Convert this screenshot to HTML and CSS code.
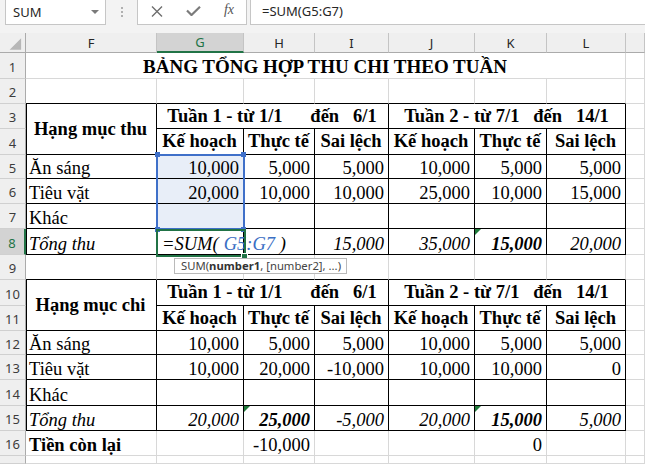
FILE: index.html
```html
<!DOCTYPE html>
<html lang="vi">
<head>
<meta charset="utf-8">
<title>SUM</title>
<link rel="stylesheet" href="styles.css">
</head>
<body>
<div class="topbar">
  <div class="namebox">
    <span class="nb-text">SUM</span>
    <svg class="dd" width="8" height="4" viewBox="0 0 8 4"><path d="M0 0H8L4 4Z" fill="#7a7a7a"/></svg>
  </div>
  <div class="dots"><i></i><i></i><i></i></div>
  <div class="btns">
    <svg class="ico" width="12" height="11" viewBox="0 0 12 11"><path d="M1 0.5L11 10.5M11 0.5L1 10.5" stroke="#6e6e6e" stroke-width="1.4" fill="none"/></svg>
    <svg class="ico" width="15" height="10" viewBox="0 0 15 10"><path d="M1 4.5L5.5 9L14 0.8" stroke="#7b7b7b" stroke-width="2.2" fill="none"/></svg>
    <span class="fx">fx</span>
  </div>
  <div class="fbox">=SUM(G5:G7)</div>
</div>

<div class="sheet">
  <!-- column headers -->
  <div class="ch corner"><svg width="26" height="20" viewBox="0 0 26 20"><path d="M10 17H22V5Z" fill="#b7b7b7"/></svg></div>
  <div class="ch">F</div><div class="ch sel">G</div><div class="ch">H</div><div class="ch">I</div><div class="ch">J</div><div class="ch">K</div><div class="ch">L</div><div class="ch"></div>

  <!-- row 1 -->
  <div class="rh">1</div>
  <div class="c cs7 m title b">BẢNG TỔNG HỢP THU CHI THEO TUẦN</div>
  <div class="c"></div>

  <!-- row 2 -->
  <div class="rh">2</div>
  <div class="c tb"></div><div class="c tb"></div><div class="c tb"></div><div class="c tb"></div><div class="c tb"></div><div class="c tb"></div><div class="c tb"></div>
  <div class="c"></div>

  <!-- row 3 -->
  <div class="rh">3</div>
  <div class="c t tl rs2 m mid b">Hạng mục thu</div>
  <div class="c t cs3 m mid b">Tuần 1 - từ 1/1      đến   6/1</div>
  <div class="c t cs3 m mid b">Tuần 2 - từ 7/1   đến   14/1</div>
  <div class="c"></div>

  <!-- row 4 -->
  <div class="rh">4</div>
  <div class="c t m mid b">Kế hoạch</div><div class="c t m mid b">Thực tế</div><div class="c t m mid b">Sai lệch</div>
  <div class="c t m mid b">Kế hoạch</div><div class="c t m mid b">Thực tế</div><div class="c t m mid b">Sai lệch</div>
  <div class="c"></div>

  <!-- row 5 -->
  <div class="rh">5</div>
  <div class="c t tl">Ăn sáng</div>
  <div class="c t r hl">10,000</div><div class="c t r">5,000</div><div class="c t r">5,000</div>
  <div class="c t r">10,000</div><div class="c t r">5,000</div><div class="c t r">5,000</div>
  <div class="c"></div>

  <!-- row 6 -->
  <div class="rh">6</div>
  <div class="c t tl">Tiêu vặt</div>
  <div class="c t r hl">20,000</div><div class="c t r">10,000</div><div class="c t r">10,000</div>
  <div class="c t r">25,000</div><div class="c t r">10,000</div><div class="c t r">15,000</div>
  <div class="c"></div>

  <!-- row 7 -->
  <div class="rh">7</div>
  <div class="c t tl">Khác</div>
  <div class="c t hl"></div><div class="c t"></div><div class="c t"></div>
  <div class="c t"></div><div class="c t"></div><div class="c t"></div>
  <div class="c"></div>

  <!-- row 8 -->
  <div class="rh sel">8</div>
  <div class="c t tl i">Tổng thu</div>
  <div class="c t i fcell"><span>=SUM(</span><span class="caret"></span><span class="ref">G5:G7</span><span> )</span></div>
  <div class="c t"></div>
  <div class="c t r i">15,000</div>
  <div class="c t r i">35,000</div>
  <div class="c t r b i tri">15,000</div>
  <div class="c t r i">20,000</div>
  <div class="c"></div>

  <!-- row 9 -->
  <div class="rh">9</div>
  <div class="c tb"></div><div class="c tb"></div><div class="c tb"></div><div class="c tb"></div><div class="c tb"></div><div class="c tb"></div><div class="c tb"></div>
  <div class="c"></div>

  <!-- row 10 -->
  <div class="rh">10</div>
  <div class="c t tl rs2 m mid b">Hạng mục chi</div>
  <div class="c t cs3 m mid b">Tuần 1 - từ 1/1      đến   6/1</div>
  <div class="c t cs3 m mid b">Tuần 2 - từ 7/1   đến   14/1</div>
  <div class="c"></div>

  <!-- row 11 -->
  <div class="rh">11</div>
  <div class="c t m mid b">Kế hoạch</div><div class="c t m mid b">Thực tế</div><div class="c t m mid b">Sai lệch</div>
  <div class="c t m mid b">Kế hoạch</div><div class="c t m mid b">Thực tế</div><div class="c t m mid b">Sai lệch</div>
  <div class="c"></div>

  <!-- row 12 -->
  <div class="rh">12</div>
  <div class="c t tl">Ăn sáng</div>
  <div class="c t r">10,000</div><div class="c t r">5,000</div><div class="c t r">5,000</div>
  <div class="c t r">10,000</div><div class="c t r">5,000</div><div class="c t r">5,000</div>
  <div class="c"></div>

  <!-- row 13 -->
  <div class="rh">13</div>
  <div class="c t tl">Tiêu vặt</div>
  <div class="c t r">10,000</div><div class="c t r">20,000</div><div class="c t r">-10,000</div>
  <div class="c t r">10,000</div><div class="c t r">10,000</div><div class="c t r">0</div>
  <div class="c"></div>

  <!-- row 14 -->
  <div class="rh">14</div>
  <div class="c t tl">Khác</div>
  <div class="c t"></div><div class="c t"></div><div class="c t"></div>
  <div class="c t"></div><div class="c t"></div><div class="c t"></div>
  <div class="c"></div>

  <!-- row 15 -->
  <div class="rh">15</div>
  <div class="c t tl i">Tổng thu</div>
  <div class="c t r i">20,000</div>
  <div class="c t r b i tri">25,000</div>
  <div class="c t r i">-5,000</div>
  <div class="c t r i">20,000</div>
  <div class="c t r b i tri">15,000</div>
  <div class="c t r i">5,000</div>
  <div class="c"></div>

  <!-- row 16 -->
  <div class="rh">16</div>
  <div class="c b">Tiền còn lại</div>
  <div class="c"></div>
  <div class="c r">-10,000</div>
  <div class="c"></div>
  <div class="c"></div>
  <div class="c r">0</div>
  <div class="c"></div>
  <div class="c"></div>

  <!-- row 17 (partly visible) -->
  <div class="rh"></div>
  <div class="c"></div><div class="c"></div><div class="c"></div><div class="c"></div><div class="c"></div><div class="c"></div><div class="c"></div><div class="c"></div>

  <!-- overlays -->
  <div class="range"></div>
  <i class="hd h1"></i><i class="hd h2"></i><i class="hd h3"></i><i class="hd h4"></i>
  <div class="active"></div>
  <i class="fillh"></i>
  <div class="tip">SUM(<b>number1</b>, [number2], ...)</div>
</div>
</body>
</html>
```

FILE: styles.css
```css
* { box-sizing: border-box; }
html, body { margin: 0; padding: 0; }
body {
  width: 645px;
  height: 464px;
  overflow: hidden;
  background: #ffffff;
  font-family: "Liberation Serif", "Times New Roman", serif;
}

/* ---------- formula bar ---------- */
.topbar {
  height: 33px;
  padding-bottom: 8px;
  background: #f3f3f3;
  display: flex;
  font-family: "Noto Sans", "Open Sans", sans-serif;
}
.namebox {
  margin-left: 5px;
  width: 101px;
  background: #fff;
  border: 1px solid #c6c6c6;
  border-top: none;
  display: flex;
  align-items: center;
  justify-content: space-between;
  padding: 0 6px 1px 7px;
}
.nb-text { font-size: 13px; color: #262626; }
.dd { margin-top: 1px; }
.dots {
  width: 31px;
  display: flex;
  flex-direction: column;
  align-items: center;
  justify-content: center;
  gap: 2px;
  padding-bottom: 2px;
}
.dots i { width: 2px; height: 2px; background: #b0b0b0; display: block; }
.btns {
  width: 110px;
  background: #fff;
  border: 1px solid #c6c6c6;
  border-top: none;
  display: flex;
  align-items: center;
  padding: 0 12px 2px 13px;
  justify-content: space-between;
}
.fx {
  font-family: "Liberation Serif", serif;
  font-style: italic;
  font-size: 14px;
  color: #555;
  padding-bottom: 2px;
}
.fbox {
  flex: 1;
  margin-left: 3px;
  background: #fff;
  border: 1px solid #c6c6c6;
  border-top: none;
  border-right: none;
  font-size: 13px;
  color: #262626;
  padding: 1px 0 0 11px;
  line-height: 20px;
}

/* ---------- sheet grid ---------- */
.sheet {
  position: relative;
  display: grid;
  grid-template-columns: 26px 131px 87px 71px 74px 86px 72px 79px 1fr;
  grid-template-rows: 20px 26px 25px 25px 26px 24px 25px 25px 26px 25px 26px 25px 24px 25px 26px 25px 25px 1fr;
  height: 431px;
  font-size: 18.5px;
  color: #000;
}

.ch {
  background: #efefef;
  border-right: 1px solid #c4c4c4;
  border-bottom: 1px solid #ababab;
  font-family: "Noto Sans", "Open Sans", sans-serif;
  font-size: 13px;
  color: #262626;
  display: flex;
  align-items: center;
  justify-content: center;
}
.ch.corner { border-right-color: #ababab; }
.ch.sel {
  background: #d3d3d3;
  color: #217346;
  border-bottom: 2px solid #217346;
}

.rh {
  background: #efefef;
  border-right: 1px solid #ababab;
  border-bottom: 1px solid #d0d0d0;
  font-family: "Noto Sans", "Open Sans", sans-serif;
  font-size: 13px;
  color: #3c3c3c;
  display: flex;
  align-items: center;
  justify-content: center;
  padding-top: 2px;
}
.rh.sel {
  background: #d3d3d3;
  color: #217346;
  border-right: 2px solid #217346;
}

.c {
  position: relative;
  border-right: 1px solid #d8d8d8;
  border-bottom: 1px solid #d8d8d8;
  display: flex;
  align-items: flex-end;
  padding: 0 4px 0 3px;
  white-space: pre;
  line-height: 19px;
}
.t { border-right-color: #000; border-bottom-color: #000; }
.tl { border-left: 1px solid #000; padding-left: 2px; }
.tb { border-bottom-color: #000; }
.r { justify-content: flex-end; }
.m { justify-content: center; }
.mid { align-items: center; }
.b { font-weight: bold; }
.i { font-style: italic; }
.hl { background: #e8eef8; }
.cs7 { grid-column: span 7; }
.cs3 { grid-column: span 3; }
.rs2 { grid-row: span 2; }
.title { padding-bottom: 2px; font-size: 19px; }

.tri::before {
  content: "";
  position: absolute;
  top: 0;
  left: 0;
  border-top: 6px solid #1f7a3a;
  border-right: 6px solid transparent;
}

/* formula in edit mode */
.fcell { padding-left: 5px; z-index: 2; }
.caret {
  width: 1px;
  height: 23px;
  background: #000;
  margin: 0 1px 1px 4px;
  align-self: flex-end;
}
.ref { color: #3b6fc4; }

/* ---------- overlays ---------- */
.range {
  position: absolute;
  left: 156px;
  top: 121px;
  width: 89px;
  height: 76px;
  border: 2px solid #3f70c9;
  z-index: 3;
}
.hd {
  position: absolute;
  width: 5px;
  height: 5px;
  background: #3f70c9;
  z-index: 4;
}
.h1 { left: 155px; top: 119px; }
.h2 { left: 241px; top: 119px; }
.h3 { left: 155px; top: 194px; }
.h4 { left: 241px; top: 194px; }
.active {
  position: absolute;
  left: 156px;
  top: 196px;
  width: 90px;
  height: 28px;
  border: 2px solid #217346;
  z-index: 5;
}
.fillh {
  position: absolute;
  left: 241px;
  top: 220px;
  width: 7px;
  height: 6px;
  background: #217346;
  border: 1px solid #fff;
  z-index: 6;
}
.tip {
  position: absolute;
  left: 174px;
  top: 225px;
  width: 173px;
  height: 16px;
  background: #fff;
  border: 1px solid #bababa;
  font-family: "Noto Sans", "Open Sans", sans-serif;
  font-size: 11.3px;
  line-height: 14px;
  color: #444;
  padding: 0 0 0 6px;
  white-space: nowrap;
  z-index: 7;
}
.tip b { font-weight: bold; color: #333; }
```
